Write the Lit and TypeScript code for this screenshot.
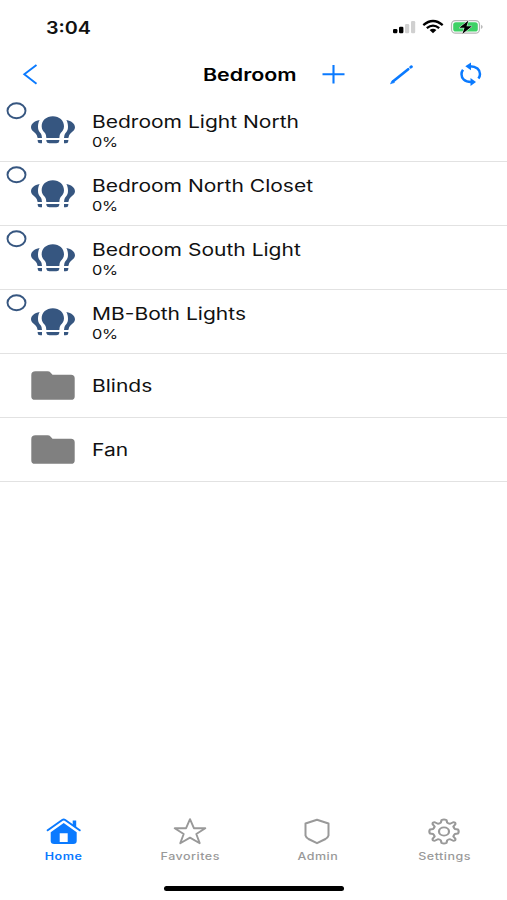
import { LitElement, html, css, svg } from "lit";
import { customElement, property } from "lit/decorators.js";

const bulbs = svg`
  <svg width="44" height="28" viewBox="93 65 132 84" fill="#365680">
    <path d="M158.500 66C178 66 192 79 192 96C192 106 187 111 182 116Q178 121 178 131H139Q139 121 135 116C130 111 125 106 125 96C125 79 139 66 158.500 66Z"/>
    <path d="M139 137H178V140Q177 147 169 147H148Q140 147 139 140Z"/>
    <path d="M119 77C103 80 93 88 93 99C93 107 99 111 106 117Q112 122 113 131H126Q126 122 122 117C117 111 114 107 114 97C114 89 116 82 119 77Z"/>
    <path d="M113 137H126V147H120Q113 147 113 140Z"/>
    <path d="M199 77C215 80 225 88 225 99C225 107 219 111 212 117Q206 122 205 131H192Q192 122 196 117C201 111 204 107 204 97C204 89 202 82 199 77Z"/>
    <path d="M205 137H192V147H198Q205 147 205 140Z"/>
  </svg>`;

const folder = svg`
  <svg width="44" height="30" viewBox="0 0 44 30" fill="#808080">
    <path d="M4.500 .3H16.500Q18.500 .3 19.700 1.700L21.500 3.700H40Q43.700 3.700 43.700 7.200V25.400Q43.700 28.800 40 28.800H4Q.3 28.800 .3 25.400V4Q.3 .3 4.500 .3Z"/>
  </svg>`;

const tabIcons: Record<string, unknown> = {
  Home: svg`<svg width="36" height="28" viewBox="-.7 0 36 28">
    <path d="M18 6L31 15.300V24Q31 27 27.500 27H8.500Q5 27 5 24V15.300ZM14 16.200V25H22V16.200Z" fill="#0a7aff" fill-rule="evenodd"/>
    <path d="M2 13.300L16.500 3Q18 2 19.500 3L34 13.300" fill="none" stroke="#0a7aff" stroke-width="2" stroke-linecap="round"/>
    <path d="M27 3.500H30.500V11L27 8.500Z" fill="#0a7aff"/>
  </svg>`,
  Favorites: svg`<svg width="36" height="28" viewBox="0 0 36 28" fill="none" stroke="#999" stroke-width="1.900" stroke-linejoin="round">
    <path d="M18 2.200L21.900 11.200H33.300L24.300 17L27.700 26.200L18 20.600L8.300 26.200L11.700 17L2.700 11.200H14.100Z"/>
  </svg>`,
  Admin: svg`<svg width="36" height="28" viewBox="0 0 36 28" fill="none" stroke="#999" stroke-width="2" stroke-linejoin="round">
    <path d="M18 2.800L29.500 6.500V18.500Q29 20.500 26.500 22L18 26.200L9.500 22Q7 20.500 6.500 18.500V6.500Z"/>
  </svg>`,
  Settings: svg`<svg width="36" height="28" viewBox="0 0 36 28" fill="none" stroke="#999" stroke-width="1.800" stroke-linejoin="round">
    <g transform="translate(18 14.500) scale(1.220 1)">
      <path d="M-2 -11.500Q0 -12.500 2 -11.500L2.600 -8.900Q3.600 -8 5 -7.700L7.600 -9.300Q9.600 -9.300 9.300 -7.300L7.700 -5Q8 -3.600 8.900 -2.500L11.500 -2Q12.500 0 11.500 2L8.900 2.500Q8 3.600 7.700 5L9.300 7.300Q9.600 9.300 7.600 9.300L5 7.700Q3.600 8 2.600 8.900L2 11.500Q0 12.500 -2 11.500L-2.600 8.900Q-3.600 8 -5 7.700L-7.600 9.300Q-9.600 9.300 -9.300 7.300L-7.700 5Q-8 3.600 -8.900 2.500L-11.500 2Q-12.500 0 -11.500 -2L-8.900 -2.500Q-8 -3.600 -7.700 -5L-9.300 -7.300Q-9.600 -9.300 -7.600 -9.300L-5 -7.700Q-3.600 -8 -2.600 -8.900Z"/>
      <circle r="4.100"/>
    </g>
  </svg>`,
};

interface Item {
  name: string;
  level?: string;
}

const items: Item[] = [
  { name: "Bedroom Light North", level: "0%" },
  { name: "Bedroom North Closet", level: "0%" },
  { name: "Bedroom South Light", level: "0%" },
  { name: "MB-Both Lights", level: "0%" },
  { name: "Blinds" },
  { name: "Fan" },
];

@customElement("device-row")
export class DeviceRow extends LitElement {
  @property({ attribute: false }) item!: Item;

  static styles = css`
    :host {
      display: grid;
      grid-template-columns: 31px 44px 1fr;
      height: 64px;
      box-sizing: border-box;
      border-bottom: 1px solid #e2e2e2;
    }
    svg { display: block; }
    .ring { margin: 4px 0 0 6px; }
    .bulbs { margin-top: 18px; }
    .folder { margin-top: 17px; }
    .text { padding-left: 17px; white-space: nowrap; }
    .name, .level { transform-origin: left; width: max-content; }
    .name {
      font-size: 17px;
      line-height: 22px;
      margin-top: 12.500px;
      transform: scaleX(1.236);
    }
    .level {
      font-size: 13.500px;
      line-height: 18px;
      letter-spacing: -0.300px;
      transform: scaleX(1.210);
    }
    .single { margin-top: 21px; }
  `;

  render() {
    const { name, level } = this.item;
    return level
      ? html`
          <svg class="ring" width="21" height="18" viewBox="0 0 21 18">
            <ellipse cx="10.500" cy="8.700" rx="9" ry="7.500" fill="none" stroke="#365680" stroke-width="1.900" />
          </svg>
          <div class="bulbs">${bulbs}</div>
          <div class="text"><div class="name">${name}</div><div class="level">${level}</div></div>`
      : html`<span></span>
          <div class="folder">${folder}</div>
          <div class="text"><div class="name single">${name}</div></div>`;
  }
}

@customElement("app-root")
export class AppRoot extends LitElement {
  static styles = css`
    :host {
      display: flex;
      flex-direction: column;
      height: 900px;
      background: #fff;
      color: #111;
      font-family: Inter, "Liberation Sans", sans-serif;
      overflow: hidden;
    }
    svg { display: block; }
    .status {
      display: flex;
      justify-content: space-between;
      height: 50px;
      padding: 0 23px 0 46px;
      box-sizing: border-box;
    }
    .time {
      font-size: 17px;
      font-weight: 600;
      line-height: 22px;
      margin-top: 17px;
      transform: scaleX(1.160);
      transform-origin: left;
    }
    .signals { margin-top: 17px; }
    .nav {
      display: grid;
      grid-template-columns: 203px 1fr 68px 68px 72px;
      height: 48px;
      align-items: center;
      color: #000;
    }
    .back { padding-left: 22px; }
    .title {
      font-size: 17px;
      font-weight: 600;
      line-height: 22px;
      width: max-content;
      margin-top: 2px;
      transform: scaleX(1.260);
      transform-origin: left;
    }
    .action { display: flex; justify-content: center; }
    .list { flex: 1; }
    .tabs { display: grid; grid-template-columns: repeat(4, 1fr); height: 69px; }
    .tab { display: flex; flex-direction: column; align-items: center; color: #999; }
    .active { color: #0a7aff; }
    .label {
      font-size: 10px;
      font-weight: 500;
      line-height: 14px;
      margin-top: 4px;
      letter-spacing: 0.400px;
      transform: translateX(0.500px) scaleX(1.250);
    }
    .active .label { font-weight: 600; }
    .indicator { width: 180px; height: 5px; border-radius: 3px; background: #000; margin: 0 auto 9px 164px; }
  `;

  render() {
    return html`
      <div class="status">
        <div class="time">3:04</div>
        <svg class="signals" width="92" height="20" viewBox="0 0 92 20">
          <rect x="1" y="12" width="4.400" height="4.200" rx="1.200" />
          <rect x="7" y="9.800" width="4.400" height="6.400" rx="1.200" />
          <rect x="13" y="7" width="4.200" height="9.200" rx="1.200" fill="#d0d0d0" />
          <rect x="19" y="4" width="4.200" height="12.200" rx="1.200" fill="#d0d0d0" />
          <g fill="none" stroke="#000" stroke-width="2.300">
            <path d="M31.300 8.100Q41 -.2 50.700 8.100" />
            <path d="M34.800 11.200Q41 6 47.200 11.200" />
          </g>
          <path d="M37.600 13Q41 10.700 44.400 13L41 16.300Z" />
          <rect x="59.500" y="3.600" width="28" height="12.600" rx="4" fill="#fff" stroke="#b5b5b5" stroke-width="1.200" />
          <rect x="61.200" y="5.200" width="24.600" height="9.400" rx="2.600" fill="#3ed165" />
          <path d="M89.200 7.800Q92 9.900 89.200 12Z" fill="#aaa" />
          <path d="M76.500 3.500L67.200 10.800H72.500L70.300 17L80 9.300H74.500Z" stroke="#fff" stroke-width="1" paint-order="stroke" />
        </svg>
      </div>
      <div class="nav">
        <svg class="back" width="18" height="22" viewBox="0 0 18 22" fill="none" stroke="#0a7aff" stroke-width="1.900">
          <path d="M14.500 1.900L2.300 11.300L14.500 20.700" />
        </svg>
        <div class="title">Bedroom</div>
        <div class="action">
          <svg width="24" height="20" viewBox="0 0 24 20" fill="none" stroke="#0a7aff" stroke-width="2.100">
            <path d="M1.500 10.200H23.500M12.500 1V19.500" />
          </svg>
        </div>
        <div class="action">
          <svg width="24" height="22" viewBox="0 0 24 22" stroke="#0a7aff" stroke-linecap="round">
            <path d="M4.200 18.300L19.200 6.300" stroke-width="2.700" />
            <path d="M1.700 20.500L3.200 17.500L5.200 19.200Z" fill="#0a7aff" stroke-width=".7" />
            <path d="M21.800 4.100L22.400 3.700" stroke-width="2.900" />
          </svg>
        </div>
        <div class="action">
          <svg width="24" height="24" viewBox="0 0 24 24" fill="none" stroke="#0a7aff" stroke-width="2.500">
            <path d="M11 4.300C17.500 4.300 21 7.800 21 12Q21 14.500 19.400 16.600" />
            <path d="M12 20C5.500 20 2.500 16.200 2.500 12.300Q2.500 9.800 4 7.700" />
            <path d="M12 .5V8.300L6.300 4.300Z" fill="#0a7aff" stroke="none" />
            <path d="M11.500 16V24L17 20Z" fill="#0a7aff" stroke="none" />
          </svg>
        </div>
      </div>
      <div class="list">${items.map((item) => html`<device-row .item=${item}></device-row>`)}</div>
      <div class="tabs">
        ${["Home", "Favorites", "Admin", "Settings"].map(
          (name, i) => html`<div class="tab ${i === 0 ? "active" : ""}">
            ${tabIcons[name]}
            <div class="label">${name}</div>
          </div>`
        )}
      </div>
      <div class="indicator"></div>
    `;
  }
}
